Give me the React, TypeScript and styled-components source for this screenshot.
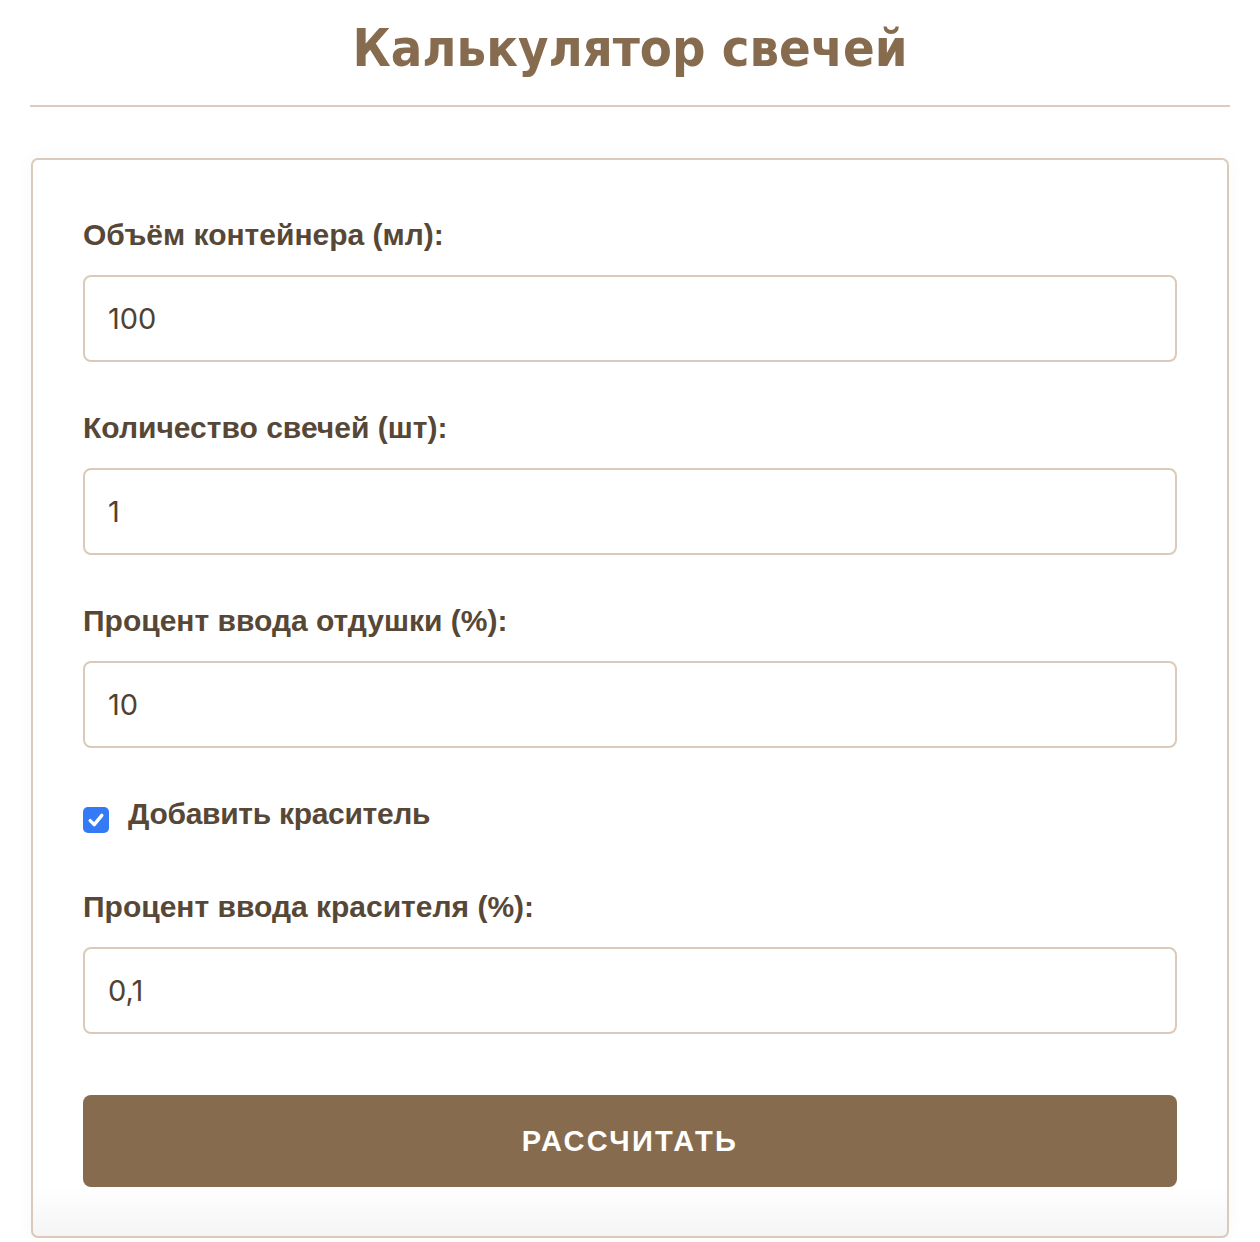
import React, { useState } from "react";
import styled, { createGlobalStyle } from "styled-components";

const GlobalStyle = createGlobalStyle`
  html, body {
    margin: 0;
    padding: 0;
    background: #fff;
  }
  * {
    box-sizing: border-box;
  }
`

const Page = styled.div`
  padding: 0 30px;
  font-family: "Liberation Sans", Arial, sans-serif;
  color: #5a4a3b;
`
const Title = styled.h1`
  margin: 0;
  padding-top: 15px;
  height: 107px;
  text-align: center;
  font-family: "DejaVu Sans Condensed", "DejaVu Sans", sans-serif;
  font-size: 52px;
  line-height: 66px;
  font-weight: 700;
  color: #876b4e;
  border-bottom: 2px solid #dacdbf;
`
const Card = styled.div`
  margin: 51px 1px 0 1px;
  padding: 57px 50px 49px 50px;
  border: 2px solid #dacabb;
  border-radius: 7px;
  background: linear-gradient(to bottom, #fff calc(100% - 50px), #f5f5f5);
  box-shadow: 0 0 18px rgba(0, 0, 0, 0.04);
`
const Field = styled.div<{ last?: boolean }>`
  display: flex;
  flex-direction: column;
  margin-bottom: ${(p) => (p.last ? 61 : 48)}px;
`
const Label = styled.label`
  font-size: 30px;
  line-height: 36px;
  font-weight: 700;
  color: #574737;
  margin-bottom: 22px;
`
const Input = styled.input`
  width: 100%;
  height: 87px;
  padding: 0 23px;
  border: 2px solid #dacabb;
  border-radius: 8px;
  font-family: Inter, "Open Sans", sans-serif;
  font-size: 29px;
  color: #4f4235;
  background: #fff;
  outline: none;
`
const CheckRow = styled.label`
  display: flex;
  align-items: center;
  gap: 19px;
  margin-bottom: 57px;
  height: 36px;
  font-size: 30px;
  line-height: 36px;
  font-weight: 700;
  letter-spacing: -0.3px;
  color: #574737;
  cursor: pointer;
`
const CheckBox = styled.span<{ checked: boolean }>`
  display: flex;
  align-items: center;
  justify-content: center;
  flex-shrink: 0;
  width: 26px;
  height: 26px;
  margin-top: 12px;
  border-radius: 5px;
  background: ${(p) => (p.checked ? "#3479f6" : "#fff")};
  border: ${(p) => (p.checked ? "none" : "2px solid #888")};
`
const Button = styled.button`
  display: block;
  width: 100%;
  height: 92px;
  border: none;
  border-radius: 8px;
  background: #876b4e;
  color: #fff;
  font-family: "Liberation Sans", Arial, sans-serif;
  font-size: 29px;
  font-weight: 700;
  letter-spacing: 2.3px;
  cursor: pointer;
`

export default function App() {
  const [volume, setVolume] = useState("100");
  const [count, setCount] = useState("1");
  const [fragrance, setFragrance] = useState("10");
  const [dye, setDye] = useState(true);
  const [dyePercent, setDyePercent] = useState("0,1");

  return (
    <Page>
      <GlobalStyle />
      <Title>Калькулятор свечей</Title>
      <Card>
        <Field>
          <Label>Объём контейнера (мл):</Label>
          <Input value={volume} onChange={(e) => setVolume(e.target.value)} />
        </Field>
        <Field>
          <Label>Количество свечей (шт):</Label>
          <Input value={count} onChange={(e) => setCount(e.target.value)} />
        </Field>
        <Field>
          <Label>Процент ввода отдушки (%):</Label>
          <Input value={fragrance} onChange={(e) => setFragrance(e.target.value)} />
        </Field>
        <CheckRow onClick={() => setDye(!dye)}>
          <CheckBox checked={dye}>
            {dye && (
              <svg width="20" height="20" viewBox="0 0 20 20">
                <path d="M4.2 10.6 L8.2 14.6 L15.8 5.4" fill="none" stroke="#fff" strokeWidth="3.4" strokeLinecap="round" strokeLinejoin="round" />
              </svg>
            )}
          </CheckBox>
          Добавить краситель
        </CheckRow>
        {dye && (
          <Field last>
            <Label>Процент ввода красителя (%):</Label>
            <Input value={dyePercent} onChange={(e) => setDyePercent(e.target.value)} />
          </Field>
        )}
        <Button>РАССЧИТАТЬ</Button>
      </Card>
    </Page>
  )
}
